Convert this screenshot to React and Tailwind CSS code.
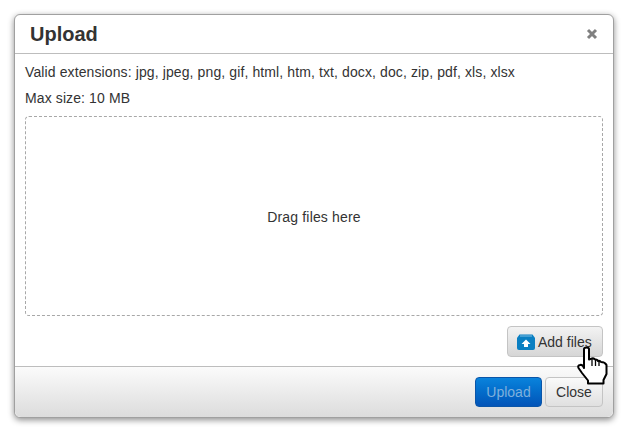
export default function App() {
  return (
    <div className="w-[627px] h-[433px] bg-white pt-[14px] pl-[14px] overflow-hidden font-['Liberation_Sans',Arial,sans-serif]">
      <div className="relative w-[600px] h-[404px] bg-white border border-[#a0a0a0] rounded-[6px] shadow-[0_2px_6px_rgba(0,0,0,0.45)] flex flex-col">
        <div className="h-[39px] shrink-0 border-b border-[#bdbdbd] flex items-center justify-between pl-[15px] pr-[15px]">
          <span className="text-[20px] font-bold text-[#333] leading-none">Upload</span>
          <svg width="12" height="12" viewBox="0 0 12 12">
            <path d="M2 2 L10 10 M10 2 L2 10" stroke="#808080" strokeWidth="3" />
          </svg>
        </div>
        <div className="flex-1 px-[10px] text-[14px] text-[#333] leading-[20px] tracking-[0.11px] flex flex-col">
          <p className="mt-[8px]">Valid extensions: jpg, jpeg, png, gif, html, htm, txt, docx, doc, zip, pdf, xls, xlsx</p>
          <p className="mt-[6px]">Max size: 10 MB</p>
          <div className="mt-[8px] h-[200px] pt-[2px] border border-dashed border-[#a8a8a8] rounded-[4px] flex items-center justify-center">
            <span className="tracking-[0.17px]">Drag files here</span>
          </div>
          <div className="flex justify-end mt-[10px]">
            <div className="h-[31px] w-[96px] border border-[#c4c4c4] rounded-[4px] bg-gradient-to-b from-[#f3f3f3] to-[#d6d6d6] flex items-center pl-[9px] gap-[3px]">
              <svg width="18" height="16" viewBox="0 0 18 16">
                <path d="M2.5 0.5 H15.5 L18 4 V14 Q18 16 16 16 H2 Q0 16 0 14 V4 Z" fill="#0a7fc2" />
                <path d="M3 2 H15" stroke="#7fc0e4" strokeWidth="1" />
                <path d="M9 5.5 L13.5 10 H11 V13 H7 V10 H4.500 Z" fill="#fff" />
              </svg>
              <span className="text-[#333] tracking-normal">Add files</span>
            </div>
          </div>
        </div>
        <div className="h-[51px] shrink-0 border-t border-[#bdbdbd] rounded-b-[6px] bg-gradient-to-b from-[#fbfbfb] to-[#dcdcdc] flex items-center justify-end gap-[3px] pr-[10px]">
          <div className="w-[67px] h-[30px] rounded-[4px] border border-[#0a55a8] bg-gradient-to-b from-[#0a83dc] to-[#0354b8] flex items-center justify-center text-[#7fb0dc] text-[14px]">Upload</div>
          <div className="w-[58px] h-[30px] rounded-[4px] border border-[#c4c4c4] bg-gradient-to-b from-[#fafafa] to-[#e0e0e0] flex items-center justify-center text-[#333] text-[14px]">Close</div>
        </div>
        <svg width="32" height="40" viewBox="0 0 32 40" className="absolute left-[562px] top-[331px]">
          <path d="M7 3 Q7 1.500 9.500 1.500 Q12 1.500 12 3 V13.500 L15 12.500 Q17 12 18 13.500 Q20 13 21 15 Q23 14.500 24 16 Q28 16 29.500 19 V28 L26.500 34 V37.500 H11 V34.500 L5 27 L1.500 22 Q0.500 19.500 3 19 Q5 18.500 6 20 L7 22 Z" fill="#fff" stroke="#000" strokeWidth="2" strokeLinejoin="round" />
          <path d="M15 12.500 V20 M18.500 13.500 V20 M22 15 V20" stroke="#000" strokeWidth="1.300" />
        </svg>
      </div>
    </div>
  );
}
